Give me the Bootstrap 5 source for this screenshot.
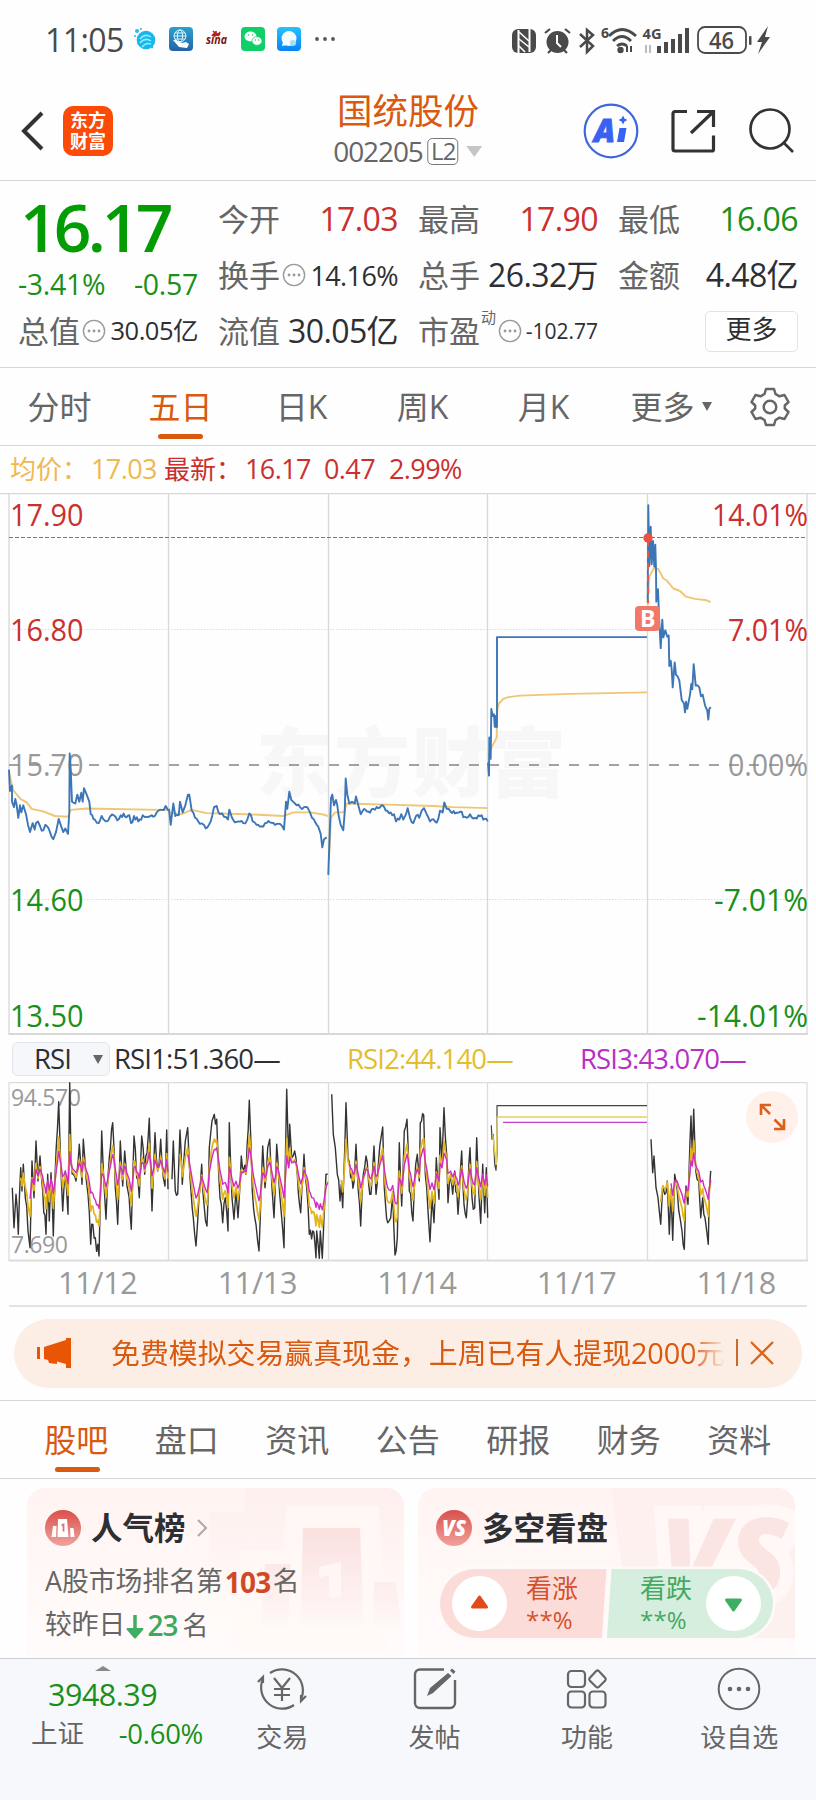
<!DOCTYPE html>
<html lang="zh-CN">
<head>
<meta charset="utf-8">
<meta name="viewport" content="width=device-width, initial-scale=1">
<title>国统股份 002205</title>
<link rel="stylesheet" href="https://cdn.jsdelivr.net/npm/bootstrap@5.3.0/dist/css/bootstrap.min.css">
<style>
:root{--ink:#2d2f33;--mute:#666;--soft:#999;--line:#d6d6d6;--up:#c9302f;--down:#1a901a;--brand:#d9590f}
body{width:816px;height:1800px;overflow:hidden;background:#fefefe;color:var(--ink);font-family:"Open Sans","Noto Sans CJK SC",sans-serif;line-height:1;margin:0}
svg{display:block;flex:none}
span,div{white-space:nowrap}
.up{color:var(--up)}.down{color:var(--down)}.brand{color:var(--brand)}.mute{color:var(--mute)}
.status{height:78px;padding:2px 43px 0 45px;color:#4a4a4a}
.clock{font-size:32px;letter-spacing:-.6px;width:87px}
.head{height:103px;border-bottom:1px solid var(--line);padding:4px 22px 0 19px}
.logo{width:50px;height:50px;border-radius:10px;background:#fb4b06;color:#fff;font-size:18px;line-height:21px;font-weight:700;padding-top:4px;margin-left:19px}
.stock{font-size:35.5px;line-height:40px}
.code{font-size:28px;height:32px;color:var(--mute);letter-spacing:-1.1px;margin-top:5px}
.lv{border:1.5px solid #777;border-radius:5px;font-size:24px;width:31px;height:27px;letter-spacing:-1px}
.tri{width:0;height:0;border:8px solid transparent;border-top:11px solid #c6c6c6;border-bottom:0}
.quote{height:187px;border-bottom:1px solid var(--line);padding:10px 18px 8px 18px;display:grid;grid-template-columns:repeat(4,180px);column-gap:20px}
.cellrow{height:56px;display:flex;align-items:center;justify-content:space-between}
.lab{font-size:31px;color:var(--mute)}
.v30{font-size:32px;letter-spacing:-.6px}.v26{font-size:27px;letter-spacing:-.6px}.v24{font-size:25.5px;letter-spacing:-.5px}
.big{height:74px;font-size:66px;font-weight:600;color:#049c04;letter-spacing:-3.9px;padding:0 0 4px 2px}
.sub{height:38px;font-size:28.5px;letter-spacing:-.3px}
.sup{font-size:15px;margin:-27px 0 0 1px}
.more{width:93px;height:41px;border:1.5px solid #e3e3e3;border-radius:5px;font-size:26px;background:#fff}
.tabs{height:78px;border-bottom:1px solid var(--line);font-size:32px;color:var(--mute)}
.tabs .t{position:relative;width:121px;height:77px;display:flex;align-items:center;justify-content:center;padding-right:2px}
.tabs .on{color:var(--brand)}
.tabs .on::after{content:"";position:absolute;bottom:6px;left:37px;width:45px;height:5px;border-radius:3px;background:var(--brand)}
.avg{height:47px;font-size:26px;padding:0 0 2px 10px}
.avg .n{font-size:27px;letter-spacing:-.6px}
.rsi{height:47px;padding:1px 0 0 12px;font-size:27.5px;letter-spacing:-.85px}
.pick{width:98px;height:34px;border:1px solid #e2e5ea;border-radius:6px;background:#f6f7fa;margin-right:4px;padding:0 6px 0 21px}
.rv{width:233px}
.dates{margin:0 9px;height:45px;border-bottom:2px solid #e3e3e3;font-size:30.5px;letter-spacing:-.3px;color:#999;padding-bottom:3px}
.dates div{width:159.6px;padding-left:18px}
.banner{margin:12px 14px 12px;height:69px;border-radius:35px;background:#fceee5;color:var(--brand);padding:0 28px 2px 22px}
.btxt{font-size:28.9px;width:614px;overflow:hidden;line-height:50px;margin-left:39px;-webkit-mask:linear-gradient(90deg,#000 94.5%,transparent 100%);mask:linear-gradient(90deg,#000 94.5%,transparent 100%)}
.sections{border-top:1px solid var(--line);height:79px;padding-left:22px}
.sections .t{width:110.5px}.sections .on::after{left:33px}
.deck{height:179px;padding:9px 21px 0 27px;gap:14px;overflow:hidden}
.tile{position:relative;width:377px;height:200px;border-radius:18px;background:linear-gradient(180deg,#fff4f2,#fffaf9 60%,#fffcfb);overflow:hidden;padding:19px 0 0 18px}
.tile>.art{position:absolute;right:0;top:0}
.tile>.d-flex{position:relative}
.ttl{font-size:31.500px;font-weight:700;margin-left:10px}
.ln{font-size:26.8px;height:43px;color:var(--mute)}
.vs{position:relative;margin:20px 0 0 4px;width:333px;height:69px}
.vs .lay{position:absolute;inset:0}
.vs .opt{position:absolute;top:5px;font-size:26px;line-height:28px}
.vs .pc{font-size:24px;line-height:24px;margin-top:6px;letter-spacing:.2px}
.dock{border-top:1.5px solid #ccd0d6;background:#f7f8fb;height:143px;color:var(--mute)}
.dock .idx{width:206px;padding:7px 3px 0 31px}
.dock .it{width:152.4px;padding-top:7px;font-size:26px}
.dock .it span{margin-top:12px}
</style>
</head>
<body>
<header class="status d-flex align-items-center">
 <span class="clock">11:05</span>
 <svg width="204" height="30" viewBox="132 25 204 30">
  <circle cx="146" cy="40" r="9.3" fill="#18b6ea"/><path d="M140 39q5-6 11-2M140 43q5-6 11-2M142 47q4-5 9-3" stroke="#8deeff" stroke-width="1.5" fill="none"/><g fill="#25bdea"><circle cx="137" cy="31" r="2"/><circle cx="135" cy="36" r="1"/><circle cx="141" cy="29" r="1"/><circle cx="152" cy="47" r="1.4"/></g>
  <defs><linearGradient id="ga" x2="0" y2="1"><stop stop-color="#27a3cd"/><stop offset="1" stop-color="#2562a9"/></linearGradient><linearGradient id="gb" x2="0" y2="1"><stop stop-color="#27c2f8"/><stop offset="1" stop-color="#0583f6"/></linearGradient></defs>
  <rect x="169" y="27" width="24" height="24" rx="4" fill="url(#ga)"/><g fill="none" stroke="#e2f7fd"><circle cx="180" cy="36" r="6"/><ellipse cx="180" cy="36" rx="2.6" ry="6"/><path d="M174 36h12M175 33h10M175 39h10"/></g><path d="M173 40l3 0 6 3 4-1 3 2-2 4-8-1z" fill="#fff"/>
  <path d="M212 36a5 4.500 0 0 1 8-1M214 37a3 3 0 0 1 5-1M213 31l2 2M216 31v2M220 32l-1 2" stroke="#b22" stroke-width="1.7" fill="none"/><text x="206" y="44" font-size="12" font-style="italic" font-weight="700" fill="#7a1510" textLength="21" lengthAdjust="spacingAndGlyphs">sina</text>
  <rect x="241" y="27" width="24" height="24" rx="4" fill="#10cf66"/><ellipse cx="250.500" cy="36.500" rx="6" ry="5" fill="#fff"/><ellipse cx="257" cy="41" rx="5" ry="4.300" fill="#fff" stroke="#10cf66" stroke-width=".7"/><g fill="#10cf66"><circle cx="248.500" cy="35" r=".8"/><circle cx="252.500" cy="35" r=".8"/><circle cx="255.500" cy="40" r=".7"/><circle cx="258.700" cy="40" r=".7"/></g>
  <rect x="277" y="27" width="24" height="24" rx="4" fill="url(#gb)"/><circle cx="289" cy="38.500" r="7.500" fill="#f2fbff"/><path d="M283 42l-1 4 5-1z" fill="#fff"/><circle cx="293" cy="43" r="3" fill="#a8dcfb"/>
  <g fill="#555"><circle cx="317" cy="39" r="1.900"/><circle cx="325" cy="39" r="1.900"/><circle cx="333" cy="39" r="1.900"/></g>
 </svg>
 <svg class="ms-auto" width="262" height="32" viewBox="510 23 262 32" fill="#4a4a4a">
  <rect x="511" y="28" width="24" height="24" rx="6"/><path d="M517.500 29v23M528.500 28v23" stroke="#fff" stroke-width="2" fill="none"/><path d="M518 31l10 9M518 38l10 8M518 45l6 6" stroke="#fff" stroke-width="1.600" fill="none"/>
  <circle cx="556.500" cy="41" r="11"/><path d="M544 32l5-4M569 32l-5-4M547 52l4-4M566 52l-4-4" stroke="#4a4a4a" stroke-width="2.200"/><path d="M556 34v8l4 4" stroke="#fff" stroke-width="2" fill="none"/>
  <path d="M579 33l13 12-6 6V29l6 5-13 12" fill="none" stroke="#4a4a4a" stroke-width="2.500"/>
  <text x="600" y="37" font-size="14" font-weight="700">6</text>
  <g fill="none" stroke="#4a4a4a" stroke-width="2.800"><path d="M608 35q13-13 27 0M612 40q9-9 18 0M616 45q5-4 10 0"/></g><circle cx="619.500" cy="49" r="3.200"/><path d="M626 45v6M630 45v6" stroke="#4a4a4a" stroke-width="2"/>
  <text x="641.500" y="38" font-size="15" font-weight="700" textLength="19" lengthAdjust="spacingAndGlyphs">4G</text>
  <path d="M645 44v8M649 44v8" stroke="#bbb" stroke-width="2"/>
  <path d="M656 45h4v7h-4zM663 41h4v11h-4zM670 38h4v14h-4zM677 33h4v19h-4zM684 27h4v25h-4z"/>
  <rect x="697" y="26" width="48" height="26" rx="7" fill="none" stroke="#4a4a4a" stroke-width="1.800"/><rect x="748" y="35" width="2.500" height="9" rx="1"/>
  <text x="708" y="47.500" font-size="23" font-weight="600" textLength="25" lengthAdjust="spacingAndGlyphs">46</text>
  <path d="M767 25l-11 16h5l-4 12 12-17h-5z"/>
 </svg>
</header>

<nav class="head d-flex align-items-center position-relative">
 <svg width="25" height="42" viewBox="0 0 25 42"><path d="M23 3L5 21l18 18" fill="none" stroke="#333" stroke-width="4"/></svg>
 <div class="logo text-center">东方<br>财富</div>
 <div class="position-absolute start-50 translate-middle-x d-flex flex-column align-items-center" style="top:12px">
  <div class="stock brand">国统股份</div>
  <div class="code d-flex align-items-center"><span>002205</span><span class="lv d-flex align-items-center justify-content-center" style="margin-left:5px">L2</span><i class="tri ms-2"></i></div>
 </div>
 <svg class="ms-auto" width="56" height="56" viewBox="0 0 56 56"><circle cx="28" cy="28" r="26.300" fill="none" stroke="#3f66dd" stroke-width="2.200"/><text x="11" y="38.500" font-size="32" font-weight="800" font-style="italic" fill="#3863f2" stroke="#3863f2" textLength="21" lengthAdjust="spacingAndGlyphs">A</text><path d="M36.500 25h7l-2.500 14h-7zM40 12.500l1.500 3 3 1.500-3 1.500-1.500 3-1.500-3-3-1.500 3-1.500z" fill="#3863f2"/></svg>
 <svg style="margin-left:31px" width="46" height="46" viewBox="0 0 46 46" fill="none" stroke="#333" stroke-width="3.200"><path d="M17 3.500H5a2 2 0 0 0-2 2V41a2 2 0 0 0 2 2h37a1.500 1.500 0 0 0 1.500-1.500V27.500M27 3.500h16.500V19M43 4L21 25"/></svg>
 <svg style="margin-left:32px" width="46" height="46" viewBox="0 0 46 46" fill="none" stroke="#333" stroke-width="2.700"><circle cx="22" cy="21" r="19.500"/><path d="M35 34l10 10"/></svg>
</nav>

<section class="quote">
 <div>
  <div class="big d-flex align-items-center">16.17</div>
  <div class="sub down d-flex align-items-center justify-content-between"><span>-3.41%</span><span>-0.57</span></div>
  <div class="cellrow"><span class="lab">总值</span><svg width="24" height="24" viewBox="0 0 24 24" style="margin-left:2px"><use href="#dots"/></svg><span class="v24 ms-auto">30.05亿</span></div>
 </div>
 <div>
  <div class="cellrow"><span class="lab">今开</span><span class="v30 up">17.03</span></div>
  <div class="cellrow"><span class="lab">换手</span><svg width="24" height="24" viewBox="0 0 24 24" style="margin-left:2px"><use href="#dots"/></svg><span class="v26 ms-auto">14.16%</span></div>
  <div class="cellrow"><span class="lab">流值</span><span class="v30">30.05亿</span></div>
 </div>
 <div>
  <div class="cellrow"><span class="lab">最高</span><span class="v30 up">17.90</span></div>
  <div class="cellrow"><span class="lab">总手</span><span class="v30">26.32万</span></div>
  <div class="cellrow"><span class="lab">市盈</span><span class="sup mute">动</span><svg width="24" height="24" viewBox="0 0 24 24" style="margin-left:2px"><use href="#dots"/></svg><span class="ms-auto" style="font-size:21px">-102.77</span></div>
 </div>
 <div>
  <div class="cellrow"><span class="lab">最低</span><span class="v30 down">16.06</span></div>
  <div class="cellrow"><span class="lab">金额</span><span class="v30">4.48亿</span></div>
  <div class="cellrow justify-content-end"><span class="more d-flex align-items-center justify-content-center pb-1">更多</span></div>
 </div>
</section>
<svg width="0" height="0" class="position-absolute"><defs><g id="dots"><circle cx="12" cy="12" r="10.600" fill="none" stroke="#999" stroke-width="1.400"/><g fill="#999"><circle cx="7" cy="12" r="1.400"/><circle cx="12" cy="12" r="1.400"/><circle cx="17" cy="12" r="1.400"/></g></g></defs></svg>

<nav class="tabs d-flex align-items-center">
 <div class="t">分时</div><div class="t on">五日</div><div class="t">日K</div><div class="t">周K</div><div class="t">月K</div>
 <div class="t" style="width:134px">更多<i class="tri" style="border-width:9px 5.500px 0;border-top-color:#666;margin-left:7px"></i></div>
 <svg style="margin-left:11px" width="40" height="40" viewBox="-20 -20 40 40" fill="none" stroke="#666" stroke-width="2.500" stroke-linejoin="round"><path d="M-4-18h8l1.500 5 4 2.300 5-1.300 4 7-3.700 3.500v3l3.700 3.500-4 7-5-1.300-4 2.300L4 18h-8l-1.500-5-4-2.300-5 1.300-4-7 3.700-3.500v-3l-3.700-3.500 4-7 5 1.300 4-2.300z"/><circle r="6.300"/></svg>
</nav>

<div class="avg d-flex align-items-center up"><span style="color:#efb950;width:81px">均价：</span><span class="n" style="color:#efb950;width:73px">17.03</span><span style="width:81px">最新：</span><span class="n" style="width:79px">16.17</span><span class="n" style="width:65px">0.47</span><span class="n">2.99%</span></div>

<svg id="price" width="816" height="542" viewBox="0 492 816 542">
 <text x="256" y="790" font-size="76" font-weight="900" fill="#f7f7f7" textLength="310">东方财富</text>
 <g stroke="#d8d8d8" stroke-width="1.300"><path d="M0 492.500H816"/><path d="M9 493V1034M168.500 493V1034M328.500 493V1034M487.500 493V1034M647.500 493V1034M807 493V1034"/><path d="M9 1033H807.600" stroke-width="2"/></g>
 <path d="M9 628.500H807M9 898.500H807" stroke="#ddd" stroke-dasharray="1.500 1.500"/>
 <g id="pl" font-size="30.300"></g>
 <path d="M9 764H807" stroke="#858585" stroke-width="1.700" stroke-dasharray="10 10"/>
 <path d="M9 536.500H807" stroke="#9b7238" stroke-width="1.200" stroke-dasharray="4 2"/>
 <g id="lines" fill="none" stroke-linejoin="round"></g>
 <path d="M648 538v64" stroke="#e9553f" stroke-width="2" stroke-dasharray="7 5"/><circle cx="648" cy="537" r="4.700" fill="#ec5040"/>
 <rect x="635" y="605" width="25" height="25" rx="4" fill="#f2786a"/><text x="640" y="626" font-size="24" font-weight="700" fill="#fff" textLength="15.500" lengthAdjust="spacingAndGlyphs">B</text>
</svg>

<div class="rsi d-flex align-items-center">
 <div class="pick d-flex align-items-center justify-content-between"><span>RSI</span><i class="tri" style="border-width:9px 5.500px 0;border-top-color:#666"></i></div>
 <span class="rv">RSI1:51.360—</span><span class="rv" style="color:#e4bd2c">RSI2:44.140—</span><span style="color:#b92fc4">RSI3:43.070—</span>
</div>

<svg width="816" height="180" viewBox="0 1081 816 180">
 <g stroke="#dcdcdc" stroke-width="1.300"><path d="M9 1081.700H807"/><path d="M9 1081V1260M168.500 1081V1260M328.500 1081V1260M487.500 1081V1260M647.500 1081V1260M807 1081V1260"/><path d="M9 1259.600H808" stroke-width="2"/></g>
 <g font-size="23" fill="#999"><text x="11" y="1105" textLength="70">94.570</text><text x="11" y="1252" textLength="57">7.690</text></g>
 <g id="osc" fill="none" stroke-linejoin="round"></g>
 <circle cx="772" cy="1116" r="26" fill="#fff0ea"/><path d="M761 1114v-10h10M761 1104l9 9M784 1118v10h-10M784 1128l-9.500-9.500" fill="none" stroke="#dc5f1b" stroke-width="2.600"/>
</svg>
<div class="dates d-flex align-items-center text-center"><div>11/12</div><div>11/13</div><div>11/14</div><div>11/17</div><div>11/18</div></div>

<div class="banner d-flex align-items-center">
 <svg width="36" height="30" viewBox="0 0 36 30"><path d="M1 9h3v12H1zM8 9l22-7V0h5v30h-5v-4l-9-2.500v2.500l-8-1-1-3-4-1z" fill="#e85505"/></svg>
 <div class="btxt">免费模拟交易赢真现金，上周已有人提现<span style="letter-spacing:-.2px">2000</span>元</div>
 <i style="width:1.500px;height:27px;background:#c9692f;margin-left:11px"></i>
 <svg class="ms-auto" width="24" height="24" viewBox="0 0 24 24"><path d="M1 1l22 22M23 1L1 23" stroke="#d9651f" stroke-width="2.300"/></svg>
</div>

<nav class="tabs sections d-flex align-items-center">
 <div class="t on">股吧</div><div class="t">盘口</div><div class="t">资讯</div><div class="t">公告</div><div class="t">研报</div><div class="t">财务</div><div class="t">资料</div>
</nav>

<main class="deck d-flex">
 <article class="tile">
  <svg class="art" width="200" height="170" viewBox="204 1488 200 170"><defs><linearGradient id="f1" x2="0" y2="1"><stop stop-color="#fae0df"/><stop offset="1" stop-color="#fffaf9"/></linearGradient><linearGradient id="f2" x2="0" y2="1"><stop stop-color="#fdefed"/><stop offset="1" stop-color="#fffaf9" stop-opacity="0"/></linearGradient><linearGradient id="red" x2="0" y2="1"><stop stop-color="#d9504b"/><stop offset="1" stop-color="#f1a29e"/></linearGradient></defs>
   <path d="M210 1512h33l3-24h158v162H208z" fill="url(#f2)"/><path d="M240 1550h43l4-44h92l8 144H233z" fill="#fff8f6" opacity=".75"/><path d="M303 1528h57l4 106h-64zM265 1564h26l-3 70h-28zM374 1582h22l6 52h-29z" fill="url(#f1)"/><path d="M319 1567l22-5v35h-12v-22l-10 3z" fill="#fff6f5"/></svg>
  <div class="d-flex align-items-center" style="height:42px"><svg width="36" height="36" viewBox="0 0 36 36"><circle cx="18" cy="18" r="18" fill="url(#red)"/><path d="M13 9h9l1.500 18h-11zM8 16h3.500l-.5 11H6.500zM25 18h3.500l1 9h-4z" fill="#fff"/><path d="M16.500 15.500l2-1v7" fill="none" stroke="#e07370" stroke-width="1.800"/></svg><span class="ttl">人气榜</span><svg class="ms-2" width="16" height="20" viewBox="0 0 16 20"><path d="M4 2l8 8-8 8" fill="none" stroke="#aaa" stroke-width="2"/></svg></div>
  <div class="ln d-flex align-items-center" style="margin-top:11px">A股市场排名第<b style="color:#cf4a22;font-size:28px;letter-spacing:-.7px;margin-left:2px">103</b><span style="margin-left:2px">名</span></div>
  <div class="ln d-flex align-items-center">较昨日<svg width="18" height="26" viewBox="0 0 18 26" style="margin:5px 3px 0 1px"><path d="M9 1v16" stroke="#3fae62" stroke-width="3.500"/><path d="M1 14h16q1 1 0 2l-7 8q-1 1-2 0l-7-8q-1-1 0-2z" fill="#3fae62"/></svg><span style="color:#3fa85e;font-weight:600;font-size:28px;letter-spacing:-1px">23</span><span style="margin-left:5px;font-size:26px">名</span></div>
 </article>
 <article class="tile">
  <svg class="art" width="190" height="170" viewBox="605 1488 190 170"><path d="M611 1488H795v150H632z" fill="#fdefed" opacity=".8"/><text x="660" y="1596" font-size="108" font-weight="800" font-style="italic" fill="#fae5e3" stroke="#fff8f6" stroke-width="26" paint-order="stroke" textLength="128" lengthAdjust="spacingAndGlyphs">VS</text></svg>
  <div class="d-flex align-items-center" style="height:42px"><svg width="36" height="36" viewBox="0 0 36 36"><circle cx="18" cy="18" r="18" fill="url(#red)"/><text x="6" y="26" font-size="22" font-weight="800" font-style="italic" fill="#fff" textLength="24" lengthAdjust="spacingAndGlyphs">VS</text></svg><span class="ttl">多空看盘</span></div>
  <div class="vs"><svg class="lay" width="333" height="69" viewBox="0 0 333 69" style="overflow:visible"><path d="M34.500 0H166.500L162 69H34.500a34.500 34.500 0 0 1 0-69z" fill="#fcdcd9" stroke="#fffafa" stroke-width="6" paint-order="stroke"/><path d="M171.500 0H298.500a34.500 34.500 0 0 1 0 69H167z" fill="#d6eedd" stroke="#fffafa" stroke-width="5" paint-order="stroke"/><circle cx="39.500" cy="34.500" r="27.500" fill="#fff"/><circle cx="293.500" cy="34.500" r="27.500" fill="#fff"/><path d="M39.500 28l7 10h-14z" fill="#e04a1d" stroke="#e04a1d" stroke-width="3" stroke-linejoin="round"/><path d="M293.500 41l-7-10h14z" fill="#3fae62" stroke="#3fae62" stroke-width="3" stroke-linejoin="round"/></svg>
   <div class="opt" style="left:86px;color:#d4512d"><div>看涨</div><div class="pc">**%</div></div><div class="opt" style="left:200px;color:#45a865"><div>看跌</div><div class="pc">**%</div></div></div>
 </article>
</main>

<footer class="dock d-flex">
 <div class="idx"><i class="d-block" style="width:0;margin-left:64px;border:8px solid transparent;border-top:0;border-bottom:5px solid #888"></i>
  <div class="down" style="font-size:30.500px;margin:8px 0 0 17px;letter-spacing:-.5px">3948.39</div>
  <div class="d-flex justify-content-between align-items-center" style="margin-top:10px"><span style="font-size:26.500px">上证</span><span class="down" style="font-size:27.500px;letter-spacing:-.3px">-0.60%</span></div></div>
 <div class="it d-flex flex-column align-items-center"><svg width="52" height="46" viewBox="-26 -23 52 46" fill="none" stroke="#666" stroke-width="2.200"><path d="M-12-16A21 21 0 0 1 19 10M12 16A21 21 0 0 1-19-10M-24-7l5-5v6M24 7l-5 5V6"/><path d="M-8-11L0-1 8-11M0-1v13M-8 0H8M-8 6H8"/></svg><span>交易</span></div>
 <div class="it d-flex flex-column align-items-center"><svg width="46" height="46" viewBox="-23 -23 46 46" fill="none" stroke="#666" stroke-width="2.400"><path d="M9-19.500H-15a5 5 0 0 0-5 5V14a5 5 0 0 0 5 5H15a5 5 0 0 0 5-5V-9"/><path d="M-8 7l3-8L13-16l3.500 3L-2 4zM15-18.500l2-2 3.500 3-2 2.500z" fill="#666" stroke="none"/></svg><span>发帖</span></div>
 <div class="it d-flex flex-column align-items-center"><svg width="46" height="46" viewBox="-23 -23 46 46" fill="none" stroke="#666" stroke-width="2.200"><rect x="-19" y="-18" width="17" height="16" rx="3.500"/><rect x="-19" y="2.500" width="17" height="16" rx="3.500"/><rect x="2.500" y="2.500" width="16" height="16" rx="3.500"/><path d="M9.200-18q1.300-1 2.600 0l6.500 7q1 1.200 0 2.400l-6.500 6.600q-1.300 1-2.600 0L2.700-8.600q-1-1.200 0-2.400z"/></svg><span>功能</span></div>
 <div class="it d-flex flex-column align-items-center"><svg width="46" height="46" viewBox="-23 -23 46 46" fill="none" stroke="#666" stroke-width="2"><circle r="20.300"/><g fill="#666" stroke="none"><circle cx="-9" r="2.300"/><circle r="2.300"/><circle cx="9" r="2.300"/></g></svg><span>设自选</span></div>
</footer>

<script src="https://cdn.jsdelivr.net/npm/bootstrap@5.3.0/dist/js/bootstrap.bundle.min.js"></script>
<script>
const NS='http://www.w3.org/2000/svg';
// axis labels: price on the left, change on the right
[['17.90','14.01%',525,'#c9302f',96],['16.80','7.01%',640,'#c9302f',80],['15.70','0.00%',774.5,'#999',80],['14.60','-7.01%',910,'#1a901a',94],['13.50','-14.01%',1026,'#1a901a',111]].forEach(r=>{
 [[r[0],10,'start',73.500],[r[1],808,'end',r[4]]].forEach(a=>{const t=document.createElementNS(NS,'text');t.textContent=a[0];t.setAttribute('x',a[1]);t.setAttribute('y',r[2]);t.setAttribute('text-anchor',a[2]);t.setAttribute('textLength',a[3]);t.setAttribute('lengthAdjust','spacingAndGlyphs');t.setAttribute('fill',r[3]);document.getElementById('pl').appendChild(t)})});
let seed=7;const rnd=()=>{seed=(seed*16807)%2147483647;return seed/2147483647-.5};
// series strings hold "x,y" pairs; sy is the number of vertical units per pixel
const parse=(s,ox,oy,sy)=>s.trim().split(/[; ]+/).map(p=>{const a=p.split(',');return[+a[0]/3+ox,+a[1]/sy+oy]});
function rough(p,step,amp){const o=[p[0]];for(let i=1;i<p.length;i++){const a=p[i-1],b=p[i],n=Math.floor((b[0]-a[0])/step);for(let k=1;k<n;k++)o.push([a[0]+(b[0]-a[0])*k/n,a[1]+(b[1]-a[1])*k/n+rnd()*amp]);o.push(b)}return o}
function draw(id,p,c,w){const e=document.createElementNS(NS,'path');e.setAttribute('d','M'+p.map(q=>q[0].toFixed(1)+' '+q[1].toFixed(1)).join('L'));e.setAttribute('stroke',c);e.setAttribute('stroke-width',w);document.getElementById(id).appendChild(e)}
const avg=[['27,790 40,838 62,863 80,872 95,890 130,897 165,910 204,912 212,893 260,889 480,893 503,893',0],['507,900 545,905 575,893 620,902 740,905 850,910 880,900 930,900 965,905 983,910',0],['27,1030 33,915 45,900 72,900 80,875 200,878 340,882 400,885 503,888',320],['506,745 514,720 530,690 532,610 537,595 550,582 565,577 600,573 750,568 981,564',320],['983,318 988,240 1000,218 1015,218 1030,245 1040,250 1060,273 1080,280 1098,296 1125,302 1160,306 1172,311',320]];
avg.forEach(a=>draw('lines',parse(a[0],a[1],490,2.8),'#efc673',1.9));
const px=[
['27,780 30,840 36,825 36,870 42,885 46,862 50,880 55,915 60,880 64,900 70,880 78,905 84,935 90,955 98,930 104,948 108,930 120,938 130,950 136,935 150,955 160,975 168,955 176,918 184,940 190,955 196,945 204,960 208,900 209,735 212,780 216,870 226,875 232,850 238,870 244,845 248,870 252,832 260,850 268,870 272,905 285,920 296,930 305,910 318,925 330,912 342,908 352,922 362,908 375,912 388,908 393,930 402,910 415,925 428,908 440,912 455,908 470,900 485,893 497,882 505,895',0,6],
['507,890 512,935 520,875 526,910 536,908 540,870 548,900 556,880 564,850 568,850 575,895 585,915 600,932 612,935 622,942 632,925 642,885 650,882 660,905 672,912 684,920 688,892 696,915 705,928 715,925 730,930 742,920 748,903 758,925 770,935 780,940 795,930 810,928 825,935 840,932 852,948 858,870 862,890 868,842 874,865 885,875 900,885 912,885 922,885 930,900 942,920 955,940 962,960 967,998 972,975 980,970',0,5],
['25,1075 29,960 33,860 37,850 42,880 48,865 52,880 56,910 62,935 70,950 74,900 77,805 82,850 88,875 96,870 104,875 108,855 115,880 122,905 132,890 145,897 160,890 175,888 188,880 197,895 212,900 222,905 228,925 238,920 244,905 250,920 258,905 263,888 270,915 280,930 288,910 298,915 305,895 312,888 320,905 330,925 345,925 355,918 360,895 368,900 373,872 380,890 392,898 405,903 420,898 435,912 450,905 465,915 480,910 490,920 503,925',320,5],
['504,760 507,797 508,690 512,750 514,610 518,630 522,625 524,660 527,630 529,662 531,660 531,409 981,409',320,0],
['983,310 985,40 988,210 992,100 995,205 999,140 1003,212 1006,150 1008,220 1009,310 1014,275 1017,350 1022,440 1027,360 1030,410 1036,390 1042,408 1046,405 1048,490 1052,475 1055,500 1058,550 1064,480 1068,515 1078,530 1085,585 1092,595 1095,620 1098,590 1102,610 1110,570 1114,540 1117,555 1121,485 1127,545 1138,550 1143,575 1148,570 1155,600 1162,615 1165,640 1168,610 1172,605',320,3]];
px.forEach(a=>draw('lines',rough(parse(a[0],a[1],490,2.8),1.4,a[2]),'#3c76b7',1.9));
const rs=[
['37,470 42,590 48,490 55,610 62,410 66,480 70,400 76,500 84,600 90,650 96,390 102,500 108,330 114,450 120,375 128,480 138,610 143,430 148,570 153,425 160,615 165,440 176,212 182,400 188,540 196,420 204,550 209,155 213,380 220,430 228,450 238,340 246,460 250,325 258,440 264,490 272,640 275,580 286,620 297,675 305,300 312,460 318,565 328,380 338,275 346,470 353,580 361,330 368,465 374,360 384,480 394,595 402,315 410,440 418,500 425,315 434,430 448,262 456,540 465,305 473,420 482,325 490,440 495,465 500,297 504,475',0],
['516,445 520,330 526,480 533,490 540,297 547,460 556,330 563,290 570,440 580,560 588,645 597,500 605,400 612,520 621,585 628,350 636,270 643,250 650,265 656,430 668,575 676,500 684,600 688,275 696,500 702,565 708,480 714,560 724,375 738,430 748,208 757,480 768,580 777,660 788,345 795,470 803,350 809,325 816,470 822,560 830,340 840,500 852,650 860,175 866,400 869,280 875,380 884,360 892,430 902,545 912,370 920,470 928,610 938,600 948,680 950,600 958,682 961,600 967,682 972,560 978,430 983,430',0],
['35,190 40,310 46,350 52,430 60,510 64,460 68,530 78,215 84,380 92,440 102,455 108,340 115,480 122,585 130,430 138,375 146,460 153,490 162,345 168,490 175,400 188,288 193,470 203,575 212,560 218,490 225,672 232,620 238,335 245,525 253,300 261,265 268,480 279,570 287,400 292,370 298,450 301,275 311,252 316,430 324,540 330,632 336,500 342,575 349,380 357,505 360,290 366,390 372,230 380,370 384,515 392,430 398,490 404,420 414,550 425,360 432,520 439,560 450,350 456,500 464,530 470,320 476,480 482,577 488,400 494,545 499,410 503,560',320],
['993,325 998,425 1002,375 1008,470 1014,500 1022,580 1028,465 1034,490 1042,450 1048,610 1053,480 1058,628 1064,430 1072,480 1080,560 1086,600 1093,655 1098,465 1104,520 1110,330 1113,255 1117,375 1121,235 1127,420 1136,450 1142,560 1148,500 1155,560 1160,600 1165,640 1168,480 1172,420',320]];
const mid=1030+435/3;
rs.forEach(a=>{const p=parse(a[0],a[1],1030,3),q=rough(p,1.1,16);
 // slower averages stay nearer to the middle line, with sharp spikes still showing
 const damp=(fast,slow,al,lift)=>{let m=p[0][1];return q.map(v=>{m+=al*(v[1]-m);return[v[0],mid-lift+fast*(v[1]-mid)+slow*(m-mid)]})};
 draw('osc',q,'#333',1.4);draw('osc',damp(.36,.3,.4,0).slice(6),'#e3b51d',1.7);draw('osc',damp(.16,.34,.3,3).slice(12),'#d12bc4',1.4)});
draw('osc',parse('514,283 516,325 520,310 524,400 528,418 531,370 531,224 981,224',320,1030,3),'#444',1.2);
draw('osc',parse('518,310 524,360 529,400 532,258 981,258',320,1030,3),'#e4cf5e',1.4);
draw('osc',parse('549,274 981,274',320,1030,3),'#c540c8',1.3);
</script>
</body>
</html>
